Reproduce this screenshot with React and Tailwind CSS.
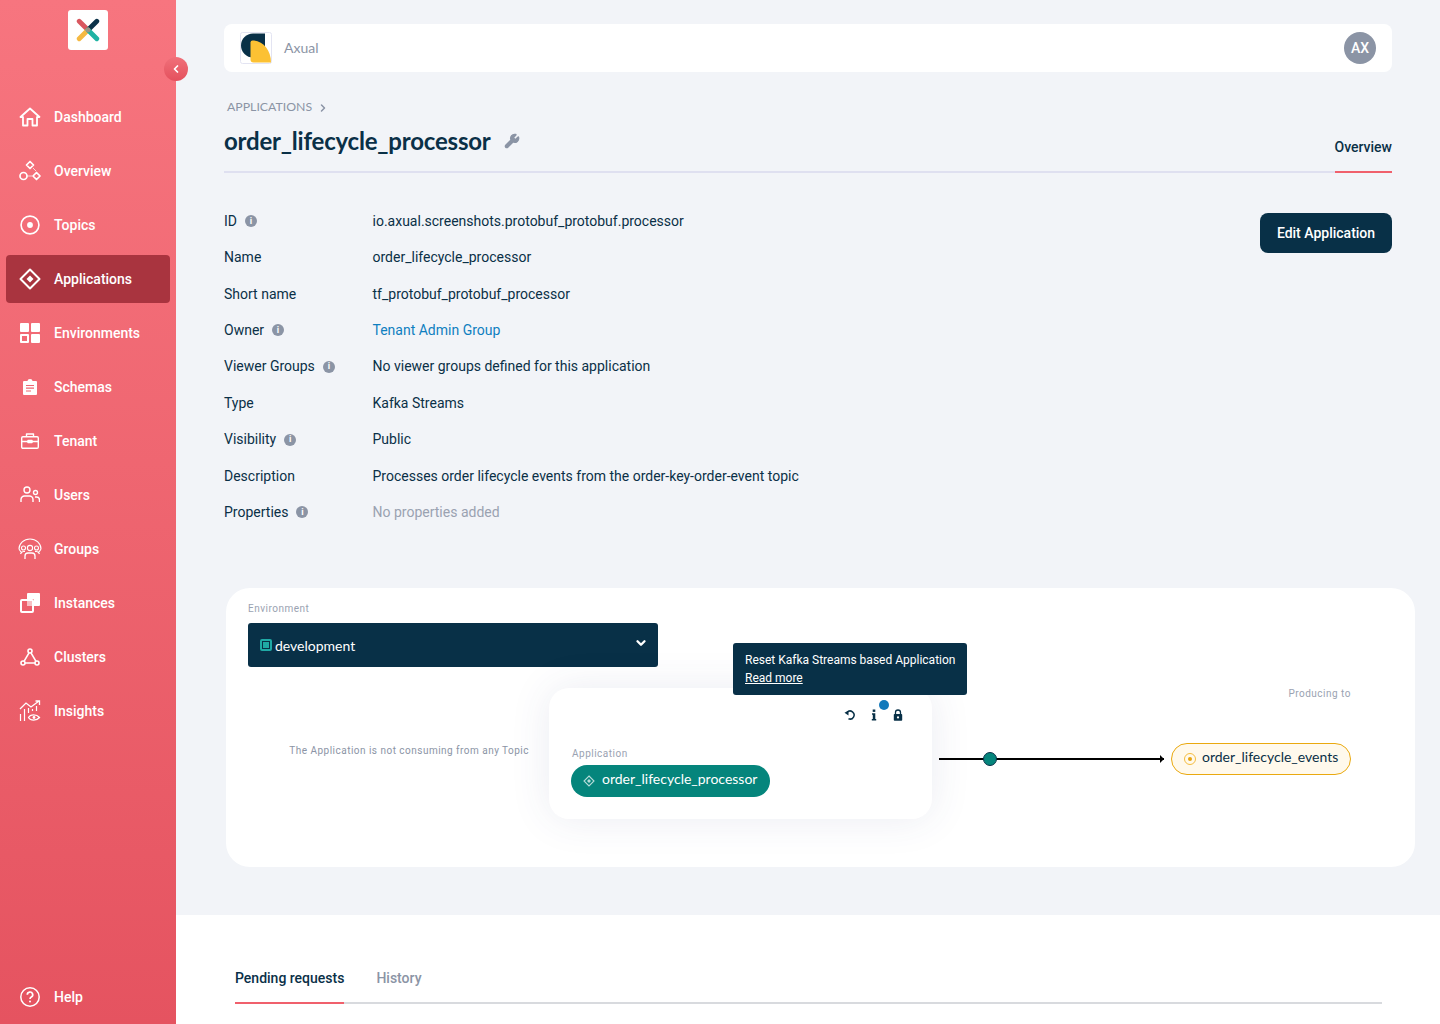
import { ChevronLeft, ChevronRight, ChevronDown, Wrench } from 'lucide-react';

const roboto = { fontFamily: 'Roboto, sans-serif' };
const lato = { fontFamily: 'Lato, sans-serif' };

const IconHome = () => (
  <svg viewBox="0 0 22 20" className="w-[22px] h-5" fill="none" stroke="white" strokeWidth="1.8" strokeLinejoin="round">
    <path d="M1.5 10 11 1.5 20.5 10H18v8.5h-4.5V12h-5v6.5H4V10z" />
  </svg>
);

const IconOverview = () => (
  <svg viewBox="0 0 22 22" className="w-[22px] h-[22px]" fill="none" stroke="white" strokeWidth="1.7">
    <path d="M11 1.5 14.5 5 11 8.500 7.500 5z" strokeLinejoin="round" />
    <circle cx="4.500" cy="16" r="3.500" />
    <path d="M17.500 12.500 21 16l-3.500 3.500L14 16z" strokeLinejoin="round" />
    <path d="M8 16h5M14 8l3 3" strokeWidth="0.7" />
  </svg>
);

const IconTopics = () => (
  <svg viewBox="0 0 22 22" className="w-5 h-5" fill="none" stroke="white" strokeWidth="1.800">
    <circle cx="11" cy="11" r="9.800" />
    <circle cx="11" cy="11" r="3.200" fill="white" stroke="none" />
  </svg>
);

const IconApplications = () => (
  <svg viewBox="0 0 22 22" className="w-[22px] h-[22px]" fill="none" stroke="white" strokeWidth="2">
    <path d="M11 1.500 20.500 11 11 20.500 1.500 11z" strokeLinejoin="round" />
    <path d="M11 7.500 14.500 11 11 14.500 7.500 11z" fill="white" stroke="none" />
  </svg>
);

const IconEnvironments = () => (
  <svg viewBox="0 0 20 20" className="w-5 h-5" fill="white">
    <rect x="0" y="0" width="9" height="9" rx="1" />
    <rect x="11" y="0" width="9" height="9" rx="1" />
    <rect x="11" y="11" width="9" height="9" rx="1" />
    <path fillRule="evenodd" d="M1 11h7a1 1 0 0 1 1 1v7a1 1 0 0 1-1 1H1a1 1 0 0 1-1-1v-7a1 1 0 0 1 1-1zm1 2v5h5v-5z" />
  </svg>
);

const IconSchemas = () => (
  <svg viewBox="0 0 14 16" className="w-[14px] h-4">
    <path fill="white" d="M1 2h3.500a2.500 2 0 0 1 5 0H13a1 1 0 0 1 1 1v12a1 1 0 0 1-1 1H1a1 1 0 0 1-1-1V3a1 1 0 0 1 1-1z" />
    <path stroke="#ef6672" strokeWidth="1.200" d="M3 6.500h8M3 9.200h8M3 12h5" />
  </svg>
);

const IconTenant = () => (
  <svg viewBox="0 0 18 16" className="w-[18px] h-4" fill="none" stroke="white" strokeWidth="1.400" strokeLinejoin="round">
    <rect x="0.700" y="3.700" width="16.600" height="11.600" rx="1.200" />
    <path d="M5.500 3.500V1h7v2.500M1 8.500h6M11 8.500h6" />
    <rect x="7" y="7.500" width="4" height="2" fill="white" />
  </svg>
);

const IconUsers = () => (
  <svg viewBox="0 0 20 18" className="w-5 h-[18px]" fill="none" stroke="white" strokeWidth="1.400">
    <circle cx="7" cy="4" r="3" />
    <path d="M1 16v-2.500A3.500 3.500 0 0 1 4.500 10h5a3.500 3.500 0 0 1 3.500 3.500V16" />
    <circle cx="15.500" cy="6.500" r="2" />
    <path d="M15 11h1.500a3 3 0 0 1 3 3v2" />
  </svg>
);

const IconGroups = () => (
  <svg viewBox="0 0 24 22" className="w-6 h-[22px]" fill="none" stroke="white" strokeWidth="1.100">
    <path d="M1 11a11 10 0 0 1 22 0" />
    <path d="M1 11c1 2 2 3 3 4M23 11c-1 2-2 3-3 4" />
    <circle cx="12" cy="10" r="2.600" />
    <circle cx="5.500" cy="10" r="2" />
    <circle cx="18.500" cy="10" r="2" />
    <path d="M7 21v-3a3 3 0 0 1 3-3h4a3 3 0 0 1 3 3v3" strokeWidth="1.300" />
    <path d="M2.500 16c.5-1.500 1.500-2.500 3-2.500h1.500M21.500 16c-.5-1.500-1.500-2.500-3-2.500H17" />
  </svg>
);

const IconInstances = () => (
  <svg viewBox="0 0 20 20" className="w-5 h-5">
    <path fill="white" d="M7 1a1 1 0 0 1 1-1h11a1 1 0 0 1 1 1v11a1 1 0 0 1-1 1h-5V7a1 1 0 0 0-1-1H7z" />
    <rect x="1" y="7" width="12" height="12" rx="1" fill="none" stroke="white" strokeWidth="2" />
    <rect x="7" y="7" width="6" height="6" fill="white" opacity="0.6" />
  </svg>
);

const IconClusters = () => (
  <svg viewBox="0 0 20 18" className="w-5 h-[18px]" fill="none" stroke="white" strokeWidth="1.600">
    <circle cx="10" cy="3" r="2" />
    <circle cx="3" cy="15" r="2" />
    <circle cx="17" cy="15" r="2" />
    <path d="M9 4.800 4 13.300M11 4.800l5 8.500M5 15h10" />
  </svg>
);

const IconInsights = () => (
  <svg viewBox="0 0 22 22" className="w-[22px] h-[22px]" fill="none" stroke="white" strokeWidth="1.300">
    <path d="M1 9 7 3l5 4 8-6M16.500 1H20.500V5" />
    <path d="M1.500 21v-7M5.500 21V9M9.500 13V8M13.500 11V9M17.500 11V6" strokeWidth="1.200" />
    <path d="M9.500 17.500c2-3.500 8-3.500 11 0-3 3.500-9 3.500-11 0z" />
    <circle cx="15" cy="17.500" r="1.400" fill="white" stroke="none" />
  </svg>
);

const IconHelp = () => (
  <svg viewBox="0 0 20 20" className="w-5 h-5" fill="none" stroke="white" strokeWidth="1.500">
    <circle cx="10" cy="10" r="9.200" />
    <path d="M7.300 7.700a2.700 2.700 0 1 1 4 2.400c-.9.500-1.300 1-1.300 1.900" strokeWidth="1.700" />
    <circle cx="10" cy="14.600" r="1" fill="white" stroke="none" />
  </svg>
);

const NAV_ITEMS = [
  { label: 'Dashboard', icon: IconHome },
  { label: 'Overview', icon: IconOverview },
  { label: 'Topics', icon: IconTopics },
  { label: 'Applications', icon: IconApplications, active: true },
  { label: 'Environments', icon: IconEnvironments },
  { label: 'Schemas', icon: IconSchemas },
  { label: 'Tenant', icon: IconTenant },
  { label: 'Users', icon: IconUsers },
  { label: 'Groups', icon: IconGroups },
  { label: 'Instances', icon: IconInstances },
  { label: 'Clusters', icon: IconClusters },
  { label: 'Insights', icon: IconInsights },
];

const DETAILS = [
  { label: 'ID', info: true, value: 'io.axual.screenshots.protobuf_protobuf.processor' },
  { label: 'Name', value: 'order_lifecycle_processor' },
  { label: 'Short name', value: 'tf_protobuf_protobuf_processor' },
  { label: 'Owner', info: true, value: 'Tenant Admin Group', tone: 'text-[#0f7fc0]' },
  { label: 'Viewer Groups', info: true, value: 'No viewer groups defined for this application' },
  { label: 'Type', value: 'Kafka Streams' },
  { label: 'Visibility', info: true, value: 'Public' },
  { label: 'Description', value: 'Processes order lifecycle events from the order-key-order-event topic' },
  { label: 'Properties', info: true, value: 'No properties added', tone: 'text-[#9aa2b1]' },
];

function NavItem({ item }) {
  const Icon = item.icon;
  return (
    <a className={`flex items-center h-12 mx-[6px] rounded-[4px] ${item.active ? 'bg-[#a9343f]' : ''}`}>
      <span className="w-12 flex items-center justify-center shrink-0">
        <Icon />
      </span>
      <span className="text-[14px] font-medium text-white">{item.label}</span>
    </a>
  );
}

function Sidebar() {
  return (
    <aside className="relative w-[176px] h-full shrink-0 flex flex-col bg-gradient-to-b from-[#f7757f] to-[#e55360]">
      <div className="flex justify-center pt-[10px]">
        <div className="w-10 h-10 bg-white rounded-[3px] flex items-center justify-center">
          <svg viewBox="0 0 30 30" className="w-6 h-6" fill="none" strokeWidth="6" strokeLinecap="round">
            <path d="M4 4 15 15" stroke="#d9575f" />
            <path d="M26 4 15 15" stroke="#0b3249" />
            <path d="M4 26 15 15" stroke="#f5b942" />
            <path d="M26 26 15 15" stroke="#1fb3a3" />
            <circle cx="15" cy="15" r="3" fill="#9b9486" stroke="none" />
          </svg>
        </div>
      </div>
      <button className="absolute left-[164px] top-[57px] w-6 h-6 rounded-full bg-gradient-to-b from-[#f0707a] to-[#e4505d] flex items-center justify-center">
        <ChevronLeft className="w-3 h-3 text-white" strokeWidth={3.500} />
      </button>
      <nav className="mt-[43px] flex-1 flex flex-col gap-[6px]">
        {NAV_ITEMS.map((item) => (
          <NavItem key={item.label} item={item} />
        ))}
      </nav>
      <div className="mb-[3px]">
        <NavItem item={{ label: 'Help', icon: IconHelp }} />
      </div>
    </aside>
  );
}

function InfoDot() {
  return (
    <span className="ml-2 w-3 h-3 rounded-full bg-[#8b94a5] inline-flex items-center justify-center text-white text-[9px] font-bold leading-none">
      i
    </span>
  );
}

function Details() {
  return (
    <div className="flex justify-between mt-[30.1px]">
      <dl className="text-[14px] text-[#0a3047]">
        {DETAILS.map((row) => (
          <div key={row.label} className="flex items-center h-[36.4px]">
            <dt className="w-[148.500px] flex items-center">
              {row.label}
              {row.info && <InfoDot />}
            </dt>
            <dd className={row.tone || ''}>{row.value}</dd>
          </div>
        ))}
      </dl>
      <button className="mt-[10px] w-[132px] h-10 rounded-lg bg-[#083047] text-white text-[14px] font-medium">
        Edit Application
      </button>
    </div>
  );
}

function CardActions() {
  return (
    <div className="absolute right-[28px] top-[21px] flex items-center gap-[12px]">
      <svg viewBox="0 0 12 12" className="w-3 h-3" fill="none" stroke="#083047" strokeWidth="1.500">
        <path d="M3.200 3.200A4 4 0 1 1 4.500 9.700" />
        <path d="M0.500 3.800 4.500 1.500V6.500z" fill="#083047" stroke="none" />
      </svg>
      <span className="relative w-3 h-3">
        <svg viewBox="0 0 12 12" className="w-3 h-3" fill="#083047">
          <rect x="4.700" y="0.500" width="2.600" height="2.400" />
          <path d="M4 4.300h3.300V10H8.200v1.500H3.800V10h1V5.800H4z" />
        </svg>
        <span className="absolute -right-[9px] -top-[9px] w-[10px] h-[10px] rounded-full bg-[#1279bb]" />
      </span>
      <svg viewBox="0 0 12 12" className="w-3 h-3">
        <path fill="none" stroke="#083047" strokeWidth="1.300" d="M3.500 5.500V3.500a2.500 2.500 0 0 1 5 0v2" />
        <rect x="1.800" y="5" width="8.400" height="6.800" rx="0.800" fill="#083047" />
        <circle cx="6" cy="8.400" r="1.100" fill="white" />
      </svg>
    </div>
  );
}

function Diagram() {
  return (
    <section className="mt-[56.9px] ml-[2px] w-[1189px] h-[279px] bg-white rounded-[24px] px-[22px] pt-[15px]">
      <div className="text-[10px] tracking-[0.5px] text-[#9aa2b1] leading-[12px]">Environment</div>
      <div className="mt-[8px] w-[410px] h-11 rounded-[3px] bg-[#083047] flex items-center justify-between pl-3 pr-[10px]">
        <div className="flex items-center gap-[3px]" style={lato}>
          <span className="w-3 h-3 rounded-[2px] border-2 border-[#1fa9a5] flex items-center justify-center">
            <span className="w-[6px] h-[6px] bg-[#1fa9a5]" />
          </span>
          <span className="text-[14px] text-white pt-[1px]">development</span>
        </div>
        <ChevronDown className="w-[14px] h-[14px] text-white -mt-[3px]" strokeWidth={4} />
      </div>

      <div className="flex mt-[21px]">
        <div className="w-[281px] pt-[57px] text-right text-[10px] tracking-[0.48px] leading-[12px] text-[#8b94a5]">
          The Application is not consuming from any Topic
        </div>
        <div className="relative ml-[20px] w-[383px] h-[131px] rounded-[20px] bg-white shadow-[0_0_40px_rgba(60,70,130,0.1)] pl-[22px] pt-[60px]">
          <div className="absolute left-[184px] -top-[45px] w-[234px] h-[52px] rounded-[3px] bg-[#083047] text-white text-[12px] leading-[18px] pl-3 pt-[8px]">
            <div>Reset Kafka Streams based Application</div>
            <div className="underline">Read more</div>
          </div>
          <CardActions />
          <div className="text-[10px] tracking-[0.5px] leading-[12px] text-[#9aa2b1] pl-px">Application</div>
          <div className="mt-[5px] w-[199px] h-8 rounded-full bg-[#05857c] flex items-center pl-[12px] gap-[7px]" style={lato}>
            <svg viewBox="0 0 12 12" className="w-3 h-3" fill="none" stroke="#b7dcd9" strokeWidth="1.100">
              <path d="M6 1 11 6 6 11 1 6z" />
              <path d="M6 4 8 6 6 8 4 6z" fill="#b7dcd9" stroke="none" />
            </svg>
            <span className="text-[14px] text-white -mt-[4px]">order_lifecycle_processor</span>
          </div>
        </div>
        <div className="ml-[7px] w-[412px]">
          <div className="text-right text-[10px] tracking-[0.5px] leading-[12px] text-[#9aa2b1]">Producing to</div>
          <div className="flex items-center mt-[44px]">
            <div className="relative w-[225px] h-[2px] bg-black">
              <span className="absolute left-[44px] -top-[6px] w-[14px] h-[14px] rounded-full bg-[#05857c] border-[1.500px] border-[#083047]" />
              <span className="absolute right-0 -top-[3px] border-y-4 border-y-transparent border-l-[4px] border-l-black" />
            </div>
            <div className="ml-[7px] -mt-[1px] w-[180px] h-8 rounded-full border border-[#eaa90f] bg-[#fff9ec] flex items-center pl-3 gap-[6px]" style={lato}>
              <span className="w-3 h-3 rounded-full border-[1.500px] border-[#f5bd3f] flex items-center justify-center">
                <span className="w-1 h-1 rounded-full bg-[#e8a50f]" />
              </span>
              <span className="text-[14px] text-[#0a3047] -mt-[4px]">order_lifecycle_events</span>
            </div>
          </div>
        </div>
      </div>
    </section>
  );
}

export default function App() {
  return (
    <div className="flex w-[1440px] h-[1024px] overflow-hidden bg-[#f2f4f8]" style={roboto}>
      <Sidebar />
      <main className="flex-1 min-w-0 flex flex-col">
        <div className="px-[48px] pt-6">
          <header className="h-12 bg-white rounded-lg flex items-center justify-between pl-[16px] pr-4">
            <div className="flex items-center">
              <svg viewBox="0 0 32 32" className="w-8 h-8">
                <rect x="0.500" y="0.500" width="31" height="31" rx="2" fill="white" stroke="#e3e4f2" />
                <path d="M25 1.500H13a12 12 0 0 0 0 24h12z" fill="#083047" />
                <path d="M12.500 8.500C23 8.500 31 18.500 31 30.500H13.500a3 3 0 0 1-3-3v-17a2 2 0 0 1 2-2z" fill="#fcc133" />
              </svg>
              <span className="ml-3 -mt-[2px] text-[14px] text-[#8b94a5]" style={lato}>Axual</span>
            </div>
            <div className="w-8 h-8 rounded-full bg-[#8b94a5] text-white text-[14px] font-medium flex items-center justify-center">AX</div>
          </header>

          <div className="mt-[27px] pl-[3px] flex items-center h-4 pt-[1px] text-[12.300px] text-[#8b94a5]" style={lato}>
            APPLICATIONS
            <ChevronRight className="w-3 h-3 ml-[5px]" strokeWidth={3} />
          </div>

          <div className="flex justify-between border-b-2 border-[#dfe0f0] h-[57px] mt-[1px]">
            <div className="flex items-start pt-[2px]">
              <h1 className="text-[24px] leading-[34px] font-bold tracking-[-0.2px] text-[#0a3047] pt-[6px]" style={lato}>
                order_lifecycle_processor
              </h1>
              <Wrench className="ml-[13px] mt-[15px] w-4 h-4 text-[#8b94a5]" fill="#8b94a5" />
            </div>
            <div className="h-[57px] border-b-2 border-[#f0606c] text-[14px] font-medium text-[#0a3047] pt-[21px]">Overview</div>
          </div>

          <Details />
          <Diagram />
        </div>

        <section className="mt-[48px] flex-1 bg-white pl-[59px] pr-[58px] pt-[53px]">
          <div className="flex border-b-2 border-[#d8dade] h-[36px] text-[14px] font-medium">
            <div className="h-[36px] border-b-2 border-[#f0606c] text-[#0a3047]">Pending requests</div>
            <div className="ml-[32px] text-[#8b94a5]">History</div>
          </div>
        </section>
      </main>
    </div>
  );
}
